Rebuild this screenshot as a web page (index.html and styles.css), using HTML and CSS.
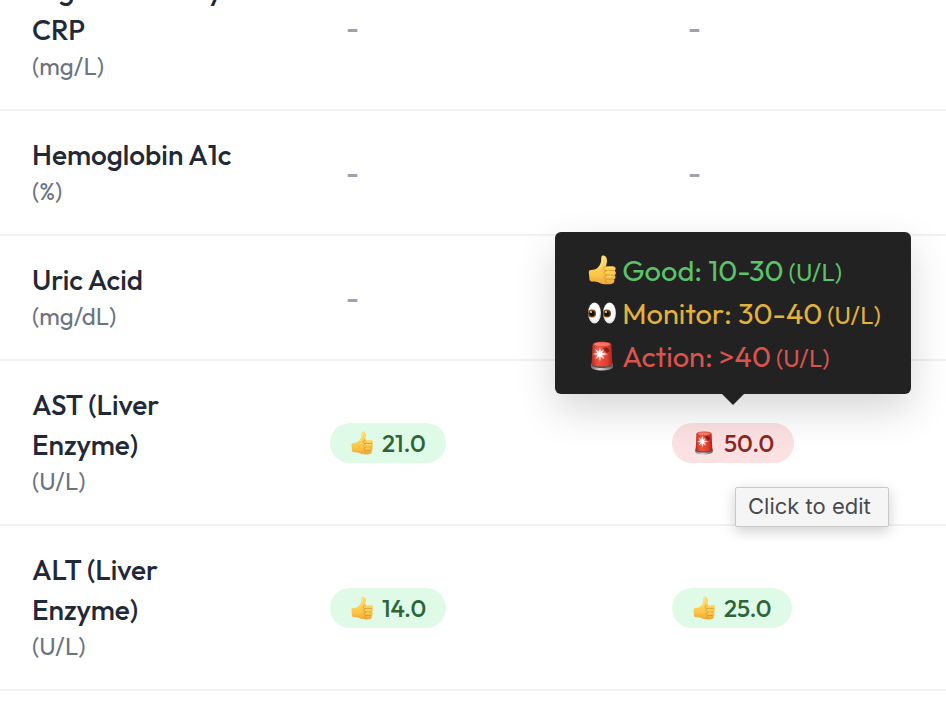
FILE: index.html
```html
<!DOCTYPE html>
<html lang="en">
<head>
<meta charset="utf-8">
<meta name="viewport" content="width=device-width, initial-scale=1">
<title>Biomarkers</title>
<link rel="stylesheet" href="styles.css">
</head>
<body>
<svg class="sprite" aria-hidden="true">
  <defs>
    <linearGradient id="skin" x1="0" y1="0" x2="0" y2="1">
      <stop offset="0" stop-color="#ffdc68"/><stop offset=".65" stop-color="#fcc84a"/><stop offset="1" stop-color="#eda93a"/>
    </linearGradient>
    <linearGradient id="lamp" x1="0" y1="0" x2="1" y2="0">
      <stop offset="0" stop-color="#b92c22"/><stop offset=".3" stop-color="#f0523f"/><stop offset=".75" stop-color="#e23b2e"/><stop offset="1" stop-color="#a9231c"/>
    </linearGradient>
    <linearGradient id="base" x1="0" y1="0" x2="1" y2="0">
      <stop offset="0" stop-color="#77716f"/><stop offset=".4" stop-color="#d8d4d1"/><stop offset="1" stop-color="#696462"/>
    </linearGradient>
    <radialGradient id="white" cx=".5" cy=".45" r=".6">
      <stop offset=".6" stop-color="#ffffff"/><stop offset="1" stop-color="#cfcfd4"/>
    </radialGradient>
    <radialGradient id="glow">
      <stop offset="0" stop-color="#ffffff"/><stop offset=".4" stop-color="#ffd5c8" stop-opacity=".8"/><stop offset="1" stop-color="#ff7a60" stop-opacity="0"/>
    </radialGradient>
  </defs>
  <symbol id="thumb" viewBox="0 0 28 30">
    <path fill="url(#skin)" d="M.8 17.200c0-1.400.8-2 2.300-2.100 2.700-.1 5.600-.9 7.500-3.300 1.700-2.200 2.600-4.500 2.600-7.200 0-2.100.1-3.900 1.800-4 2.600-.1 4.100 2.500 4 5.300-.1 2.100-.8 3.700-1 5.500l6.500-.1c2.200 0 3.200 1.200 3.100 2.500-.1 1.100-.5 1.600-1 2 1 .5 1.300 1.400 1.200 2.400-.1 1.100-.7 1.700-1.400 2.100.8.500 1.100 1.200 1 2.100-.1 1.200-.8 1.800-1.700 2.100.6.500.8 1.100.7 1.800-.2 1.700-1.600 2.500-3.600 2.700-4.300.5-8.500.4-11.700-1.200-2.200-1.100-3.900-1.200-6.300-1.200-1.900 0-3-.5-3.300-2z"/>
    <path fill="none" stroke="#d3902b" stroke-width=".8" stroke-linecap="round" d="M18.200 11.200c-1.800.2-2.700 1-2.700 2.300 0 1.500 1.300 2.200 2.700 2.200h8.400M18 15.800c-1.500.3-2.100 1.100-2 2.300.1 1.300 1 2 2.200 2.100h7.900M18 20.300c-1.200.4-1.600 1.100-1.500 2.100.1 1.200.9 1.800 2 1.900h6.500M18.300 24.400c-1.200.6-1.200 2.700.5 3.500"/>
    <path fill="none" stroke="#fff0a0" stroke-width="1" stroke-linecap="round" opacity=".7" d="M14.800 2c.4 4.200-.8 7.600-3.100 10.300M19.500 12.300h5.200M19.500 16.900h5.400M19.500 21.300h4.700"/>
  </symbol>
  <symbol id="eyes" viewBox="0 0 30 24">
    <ellipse cx="7.500" cy="12" rx="6.400" ry="10.600" fill="url(#white)"/>
    <ellipse cx="22.500" cy="12" rx="6.400" ry="10.600" fill="url(#white)"/>
    <circle cx="5" cy="12.500" r="4" fill="#774314"/>
    <circle cx="20" cy="12.500" r="4" fill="#774314"/>
    <circle cx="5" cy="12.500" r="2.600" fill="#17100c"/>
    <circle cx="20" cy="12.500" r="2.600" fill="#17100c"/>
    <circle cx="4" cy="11" r=".9" fill="#fff"/>
    <circle cx="19" cy="11" r=".9" fill="#fff"/>
  </symbol>
  <symbol id="siren" viewBox="0 0 24 30">
    <path fill="url(#base)" d="M1 22.500h22v3.200c0 2.200-5 3.800-11 3.800S1 27.900 1 25.700z"/>
    <path fill="#5d4f4d" d="M1.600 22h20.800v2.300c0 1.500-4.700 2.700-10.400 2.700S1.600 25.800 1.600 24.300z"/>
    <path fill="url(#lamp)" d="M2.500 4C2.700 1.700 6 .7 12 .7S21.300 1.700 21.500 4l.9 18.600c0 1.700-4.500 2.900-10.400 2.900S1.600 24.300 1.600 22.600z"/>
    <ellipse cx="12" cy="3.300" rx="8.200" ry="1.800" fill="#ff9282" opacity=".7"/>
    <path fill="#8c1c19" d="M13 7.500c3-2.300 6.200-.8 6.500 2.600l-2.700 2.300c-.4-2-1.500-2.600-3.500-1.900z"/>
    <circle cx="10" cy="13" r="7" fill="url(#glow)" opacity=".7"/>
    <path fill="#fff" d="M10 5.500l.7 5.600 3.900-3.400-2.900 4.400 6.600.9-6.500.9 2.900 4.400-4-3.100-.7 6-.8-6-4 3.100 2.800-4.500L2.500 13l5-.9-2.800-4.300 4 3.300z"/>
  </symbol>
</svg>
<main class="panel">
  <table class="markers" aria-label="Biomarker results">
    <colgroup><col class="col-name"><col class="col-value"><col></colgroup>
    <tbody>
      <tr>
        <th scope="row">High Sensitivity<br>CRP<span class="unit">(mg/L)</span></th>
        <td><button class="empty" type="button">-</button></td>
        <td><button class="empty" type="button">-</button></td>
      </tr>
      <tr>
        <th scope="row">Hemoglobin A1c<span class="unit">(%)</span></th>
        <td><button class="empty" type="button">-</button></td>
        <td><button class="empty" type="button">-</button></td>
      </tr>
      <tr>
        <th scope="row">Uric Acid<span class="unit">(mg/dL)</span></th>
        <td><button class="empty" type="button">-</button></td>
        <td></td>
      </tr>
      <tr>
        <th scope="row">AST (Liver<br>Enzyme)<span class="unit">(U/L)</span></th>
        <td><button class="pill good" type="button"><svg class="emoji" aria-hidden="true"><use href="#thumb"/></svg>21.0</button></td>
        <td>
          <div class="anchor">
            <button class="pill action" type="button" aria-describedby="ranges"><svg class="emoji" aria-hidden="true"><use href="#siren"/></svg>50.0</button>
            <div class="ranges" id="ranges" role="tooltip">
              <div class="range range-good"><svg class="range-icon" aria-hidden="true"><use href="#thumb"/></svg><span>Good: 10-30<small> (U/L)</small></span></div>
              <div class="range range-monitor"><svg class="range-icon" aria-hidden="true"><use href="#eyes"/></svg><span>Monitor: 30-40<small> (U/L)</small></span></div>
              <div class="range range-action"><svg class="range-icon" aria-hidden="true"><use href="#siren"/></svg><span>Action: &gt;40<small> (U/L)</small></span></div>
            </div>
            <div class="hint" role="tooltip">Click to edit</div>
          </div>
        </td>
      </tr>
      <tr>
        <th scope="row">ALT (Liver<br>Enzyme)<span class="unit">(U/L)</span></th>
        <td><button class="pill good" type="button"><svg class="emoji" aria-hidden="true"><use href="#thumb"/></svg>14.0</button></td>
        <td><button class="pill good" type="button"><svg class="emoji" aria-hidden="true"><use href="#thumb"/></svg>25.0</button></td>
      </tr>
    </tbody>
  </table>
</main>
</body>
</html>
```
FILE: styles.css
```css
* {
  box-sizing: border-box;
}

body {
  margin: 0;
  background: #fff;
  color: #1f2937;
  font-family: Outfit, Lato, "Liberation Sans", sans-serif;
  font-size: 28px;
  line-height: 40px;
}

.sprite {
  position: absolute;
  width: 0;
  height: 0;
}

.panel {
  height: 100vh;
  overflow: hidden;
}

/* The list is scrolled part of the way into its first row. */
.markers {
  width: 100%;
  margin-top: -54px;
  table-layout: fixed;
  border-collapse: separate;
  border-spacing: 0;
}

.col-name {
  width: 298px;
}

.col-value {
  width: 342px;
}

th,
td {
  padding: 24px 32px;
  border-bottom: 2px solid #f1f1f2;
  text-align: left;
  vertical-align: middle;
}

th {
  padding-bottom: 26px;
  font-weight: 500;
  white-space: nowrap;
}

.unit {
  display: block;
  color: #6b7280;
  font-size: 24px;
  font-weight: 400;
  line-height: 33px;
}

button {
  border: 0;
  background: none;
  font: inherit;
  cursor: pointer;
}

.empty {
  display: block;
  padding: 0 16px;
  color: #9ca3af;
  font-weight: 500;
}

.pill {
  display: flex;
  align-items: center;
  gap: 8px;
  height: 40px;
  padding: 0 20px;
  border-radius: 20px;
  font-size: 24px;
  font-weight: 500;
}

.good {
  background: #e0fae8;
  color: #2d6539;
}

.action {
  background: #fbe1e1;
  color: #8c2723;
}

.emoji {
  width: 24px;
  height: 24px;
}

.anchor {
  position: relative;
  width: fit-content;
}

.ranges {
  position: absolute;
  bottom: calc(100% + 29px);
  left: 50%;
  width: 356px;
  padding: 17px 28px 16px 32px;
  border-radius: 6px;
  background: #222;
  box-shadow: 0 16px 40px rgba(0, 0, 0, .16);
  font-size: 29px;
  transform: translateX(-50%);
  white-space: nowrap;
}

.ranges::after {
  content: "";
  position: absolute;
  top: 100%;
  left: 50%;
  border: 11px solid transparent;
  border-top-color: #222;
  border-bottom: 0;
  transform: translateX(-50%);
}

.range {
  display: flex;
  align-items: center;
  gap: 5px;
  line-height: 43px;
}

.range small {
  font-size: 24px;
  line-height: 1;
}

.range-icon {
  flex: none;
  width: 30px;
  height: 30px;
}

.range-good {
  color: #5bc36a;
}

.range-monitor {
  color: #e2b23c;
}

.range-action {
  color: #db534d;
}

.hint {
  position: absolute;
  top: calc(100% + 24px);
  left: 63px;
  width: 154px;
  padding: 0 12px 1px;
  border: 1px solid #c9c9c9;
  border-radius: 2px;
  background: #f5f5f5;
  box-shadow: 0 4px 14px rgba(0, 0, 0, .2);
  color: #4a4a4a;
  font-family: Inter, sans-serif;
  font-size: 22px;
  line-height: 37px;
  white-space: nowrap;
}
```
